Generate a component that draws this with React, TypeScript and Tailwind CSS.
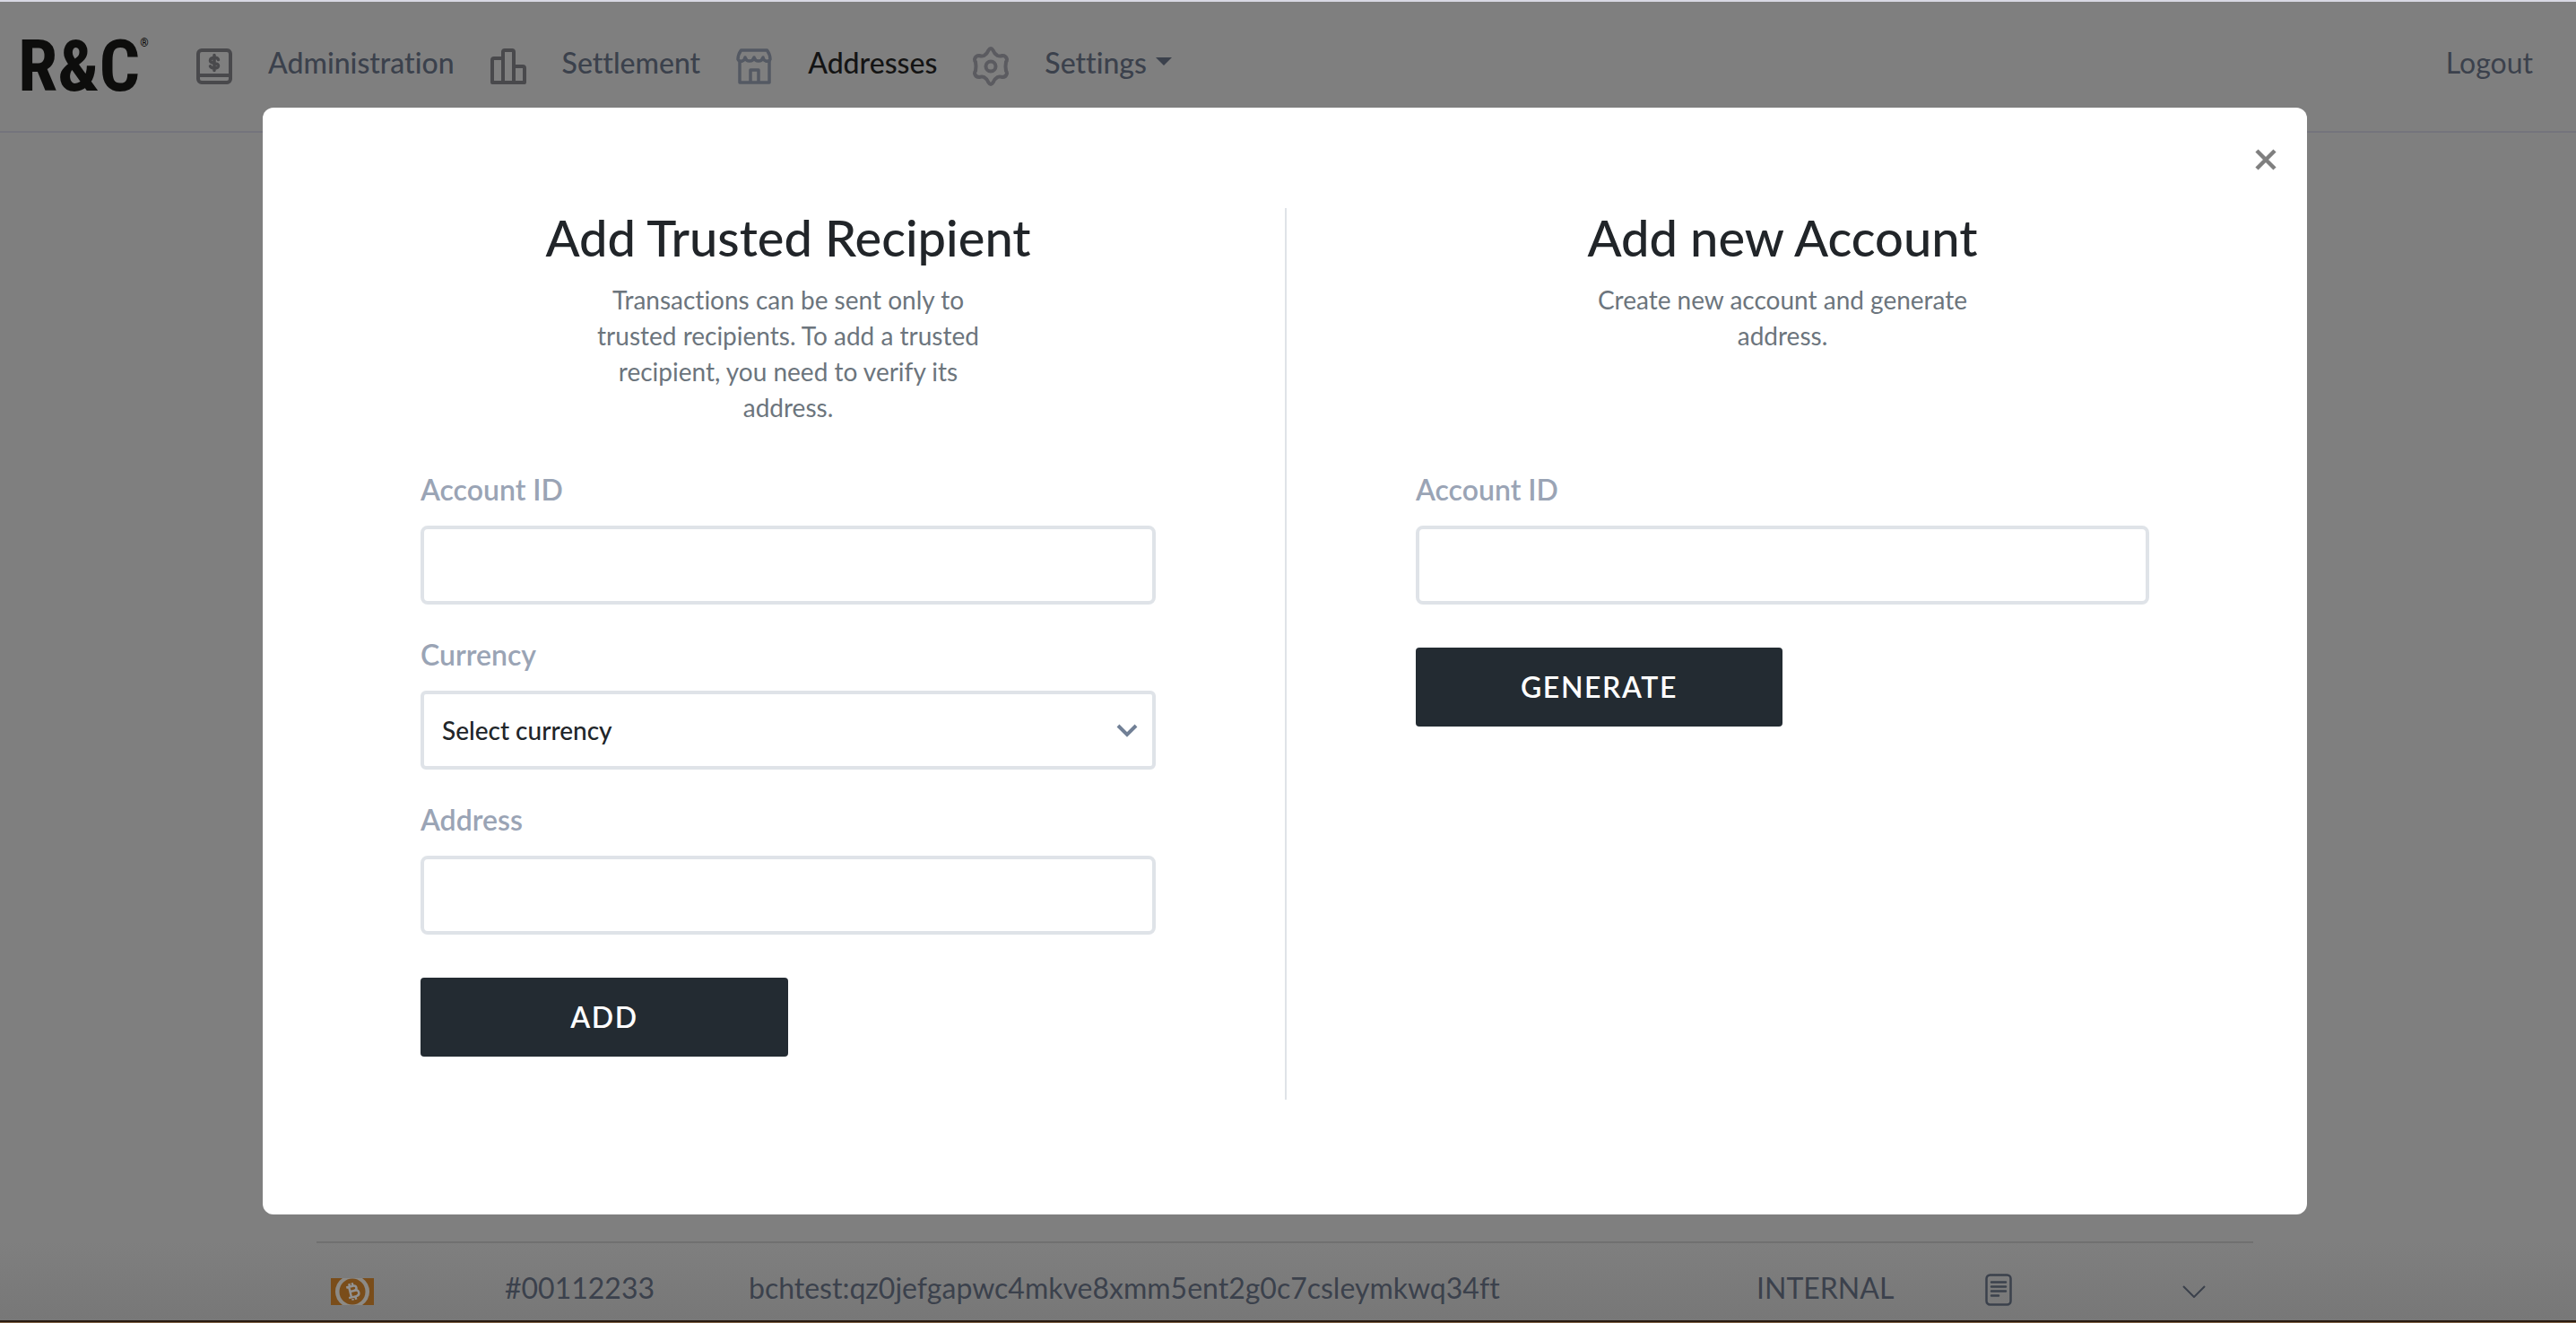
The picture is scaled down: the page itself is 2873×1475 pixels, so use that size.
import React from "react";

const IconCash = () => (
  <svg viewBox="0 0 40 40" className="size-10" fill="none" stroke="#49494c" strokeWidth="4">
    <rect x="2" y="2" width="36" height="36" rx="4" />
    <path d="M2 30h36" />
    <path d="M24.500 12.500c-1-3-8.500-3-9 .8c-.4 4.400 9.500 2 9 6.200c-.5 3.500-8 3.300-9 .3M20 7.500v17" strokeWidth="3.500" strokeLinecap="round" />
  </svg>
);

const IconBars = () => (
  <svg viewBox="0 0 40 40" className="size-10" fill="none" stroke="#49494c" strokeWidth="4" strokeLinejoin="round">
    <path d="M14 38V4a2 2 0 0 1 2-2h8a2 2 0 0 1 2 2v34M14 11H4a2 2 0 0 0-2 2v25h36V22a2 2 0 0 0-2-2H26" />
  </svg>
);

const IconStore = () => (
  <svg viewBox="0 0 40 40" className="size-10" fill="none" stroke="#545963" strokeWidth="4" strokeLinejoin="round">
    <path d="M5.500 2h29Q38 7 38 12q-1.500 3-5 2q-2.500-1-3-4q-1 4-5 4t-5-4q-1 4-5 4t-5-4q-.5 3-3 4q-3.500 1-5-2Q2 7 5.500 2z" strokeWidth="3.500" />
    <path d="M4 14v24h33V14M16 38V24h9v14" strokeWidth="3.500" />
  </svg>
);

const IconGear = () => (
  <svg viewBox="0 0 40 44" className="h-11 w-10" fill="none" stroke="#5b5b60" strokeWidth="4" strokeLinejoin="round">
    <path d="M17.500 4q2.500-4 5 0q1.500 4 5 6q2.500 1 5.500 0q4 0 5 4q0 2-1 3q-1 5 0 10q1 1 1 3q-1 4-5 4q-3-1-5.500 0q-3.500 2-5 6q-2.500 4-5 0q-1.500-4-5-6q-2.500-1-5.500 0q-4 0-5-4q0-2 1-3q1-5 0-10q-1-1-1-3q1-4 5-4q3 1 5.500 0q3.500-2 5-6z" />
    <circle cx="20" cy="22" r="5.500" />
  </svg>
);

const IconBch = () => (
  <svg viewBox="0 0 48 30" className="h-[30px] w-12">
    <path d="M0 0h48v30H0z" fill="#7a4d1a" />
    <path d="M13 0h22a18 18 0 0 1 0 30H13a18 18 0 0 1 0-30z" fill="#8c8a86" />
    <circle cx="24" cy="15" r="14.500" fill="#7a4d1a" />
    <g fill="none" stroke="#929292" strokeWidth="2.500" transform="rotate(-14 24 15)">
      <path d="M18.500 9H26c4.500 0 4.500 5.500 0 5.500h-4.500H27c5 0 5 6.500 0 6.500h-8.500M21.500 9v12M22.500 5.500V9M26 5.500V9M22.500 21v3.500M26 21v3.500" />
    </g>
  </svg>
);

const navLink = "text-[32px] leading-10 font-medium";

function Header() {
  return (
    <header className="flex h-[148px] items-start border-t-2 border-b-2 border-t-[#d8d8e4] border-b-[#74747c] pr-12 text-[#3b414c]">
      <a
        href="#home"
        className="mt-9 ml-5 flex h-[72px] w-[152px] shrink-0 items-center font-['Liberation_Sans_Narrow','Roboto_Condensed',sans-serif] text-[80px] leading-none font-bold text-[#0d0d0c]"
      >
        R&amp;C
        <span className="self-start pt-1 text-[12px] leading-3">®</span>
      </a>
      <nav className="flex flex-1 items-start pt-[48px]">
        <a href="#administration" className="ml-[47px] flex gap-10">
          <span className="pt-1"><IconCash /></span>
          <span className={navLink}>Administration</span>
        </a>
        <a href="#settlement" className="ml-10 flex gap-10">
          <span className="pt-1"><IconBars /></span>
          <span className={navLink}>Settlement</span>
        </a>
        <a href="#addresses" className="ml-10 flex gap-10">
          <span className="pt-1"><IconStore /></span>
          <span className="text-[32px] leading-10 font-medium text-[#141414]">Addresses</span>
        </a>
        <button className="ml-10 flex gap-10">
          <span className="pt-0.5"><IconGear /></span>
          <span className="flex gap-2.5">
            <span className={navLink}>Settings</span>
            <svg viewBox="0 0 18 9" className="mt-3.5 h-[9px] w-[18px]" fill="#3b414c"><path d="M0 0h18l-9 9z" /></svg>
          </span>
        </button>
      </nav>
      <a href="#logout" className="mt-[48px] text-[32px] leading-10">Logout</a>
    </header>
  );
}

function AddressTable() {
  return (
    <div className="pr-[360px] pl-[353px]">
      <table className="w-full table-fixed text-left text-[32px] leading-10 text-[#3b414c]">
        <tbody>
          <tr className="h-[87px] border-t-2 border-[#707070] align-top">
            <td className="w-[210px] pt-[39px] pl-4"><IconBch /></td>
            <td className="w-[272px] pt-[30px]">#00112233</td>
            <td className="pt-[30px]">bchtest:qz0jefgapwc4mkve8xmm5ent2g0c7csleymkwq34ft</td>
            <td className="w-[255px] pt-[30px]">INTERNAL</td>
            <td className="w-[220px] pt-[34px]">
              <button aria-label="Details" className="block">
                <svg viewBox="0 0 30 36" className="h-9 w-[30px]" fill="none" stroke="#3b414c" strokeWidth="2.500" strokeLinecap="round">
                  <rect x="1.500" y="1.500" width="27" height="33" rx="4" />
                  <path d="M7 9.500h16M7 14.500h16M7 19.500h16M7 24.500h8" />
                </svg>
              </button>
            </td>
            <td className="w-[79px] pt-[47px]">
              <button aria-label="Expand" className="block">
                <svg viewBox="0 0 26 14" className="h-3.5 w-[26px]" fill="none" stroke="#3b414c" strokeWidth="2"><path d="M1 1l12 12L25 1" /></svg>
              </button>
            </td>
          </tr>
        </tbody>
      </table>
    </div>
  );
}

function Field({ id, label, children }: { id: string; label: string; children?: React.ReactNode }) {
  return (
    <div className="mb-9">
      <label htmlFor={id} className="mb-5 block text-[32px] leading-10 font-semibold text-[#9aa4b5]">{label}</label>
      {children ?? <input id={id} type="text" className="block h-22 w-full rounded-lg border-4 border-[#dfe3e8] px-5 text-[28px] outline-none" />}
    </div>
  );
}

function Intro({ title, children }: { title: string; children: React.ReactNode }) {
  return (
    <div className="h-[294px] text-center">
      <h2 className="mb-4 text-[56px] leading-[66px] font-medium text-[#212529]">{title}</h2>
      <p className="mx-auto max-w-[440px] text-[28px] leading-10 text-[#6c757d]">{children}</p>
    </div>
  );
}

const submit = "mt-12 block h-22 w-1/2 rounded bg-[#232b32] text-[32px] font-semibold tracking-wider text-white";

function Modal() {
  return (
    <div role="dialog" aria-modal="true" className="relative rounded-xl bg-white px-8 pt-28 pb-32">
      <button aria-label="Close" className="absolute top-[46px] right-[34px]">
        <svg viewBox="0 0 24 24" className="size-6" fill="none" stroke="#7f7f7f" strokeWidth="4.500"><path d="M2 2l20 20M22 2L2 22" /></svg>
      </button>
      <div className="grid grid-cols-2">
        <form className="h-[994px] px-36">
          <Intro title="Add Trusted Recipient">
            Transactions can be sent only to trusted recipients. To add a trusted recipient, you need to verify its address.
          </Intro>
          <Field id="recipient-account" label="Account ID" />
          <Field id="currency" label="Currency">
            <div className="relative">
              <select id="currency" className="block h-22 w-full appearance-none rounded-md border-4 border-[#dfe3e8] bg-white px-5 text-[28px] font-medium text-[#212529] outline-none">
                <option>Select currency</option>
              </select>
              <svg viewBox="0 0 24 15" className="pointer-events-none absolute top-[37px] right-5 h-[15px] w-6" fill="none" stroke="#718096" strokeWidth="4"><path d="M2 2l10 10L22 2" /></svg>
            </div>
          </Field>
          <Field id="address" label="Address" />
          <button type="button" className={submit}>ADD</button>
        </form>
        <form className="border-l-2 border-[#dfe3e8] px-36">
          <Intro title="Add new Account">Create new account and generate address.</Intro>
          <Field id="new-account" label="Account ID" />
          <button type="button" className={submit}>GENERATE</button>
        </form>
      </div>
    </div>
  );
}

export default function App() {
  return (
    <div className="relative flex min-h-screen flex-col justify-between bg-[#7f7f7f] font-['Lato',sans-serif] [font-variant-ligatures:none]">
      <Header />
      <div className="bg-linear-to-b from-[#7f7f7f] to-[#777777]">
        <AddressTable />
        <div className="h-[3px] border-b border-[#7e6145] bg-[#2a1b11]" />
      </div>
      <div className="absolute inset-x-0 top-[120px] pr-[300px] pl-[293px]">
        <Modal />
      </div>
    </div>
  );
}
